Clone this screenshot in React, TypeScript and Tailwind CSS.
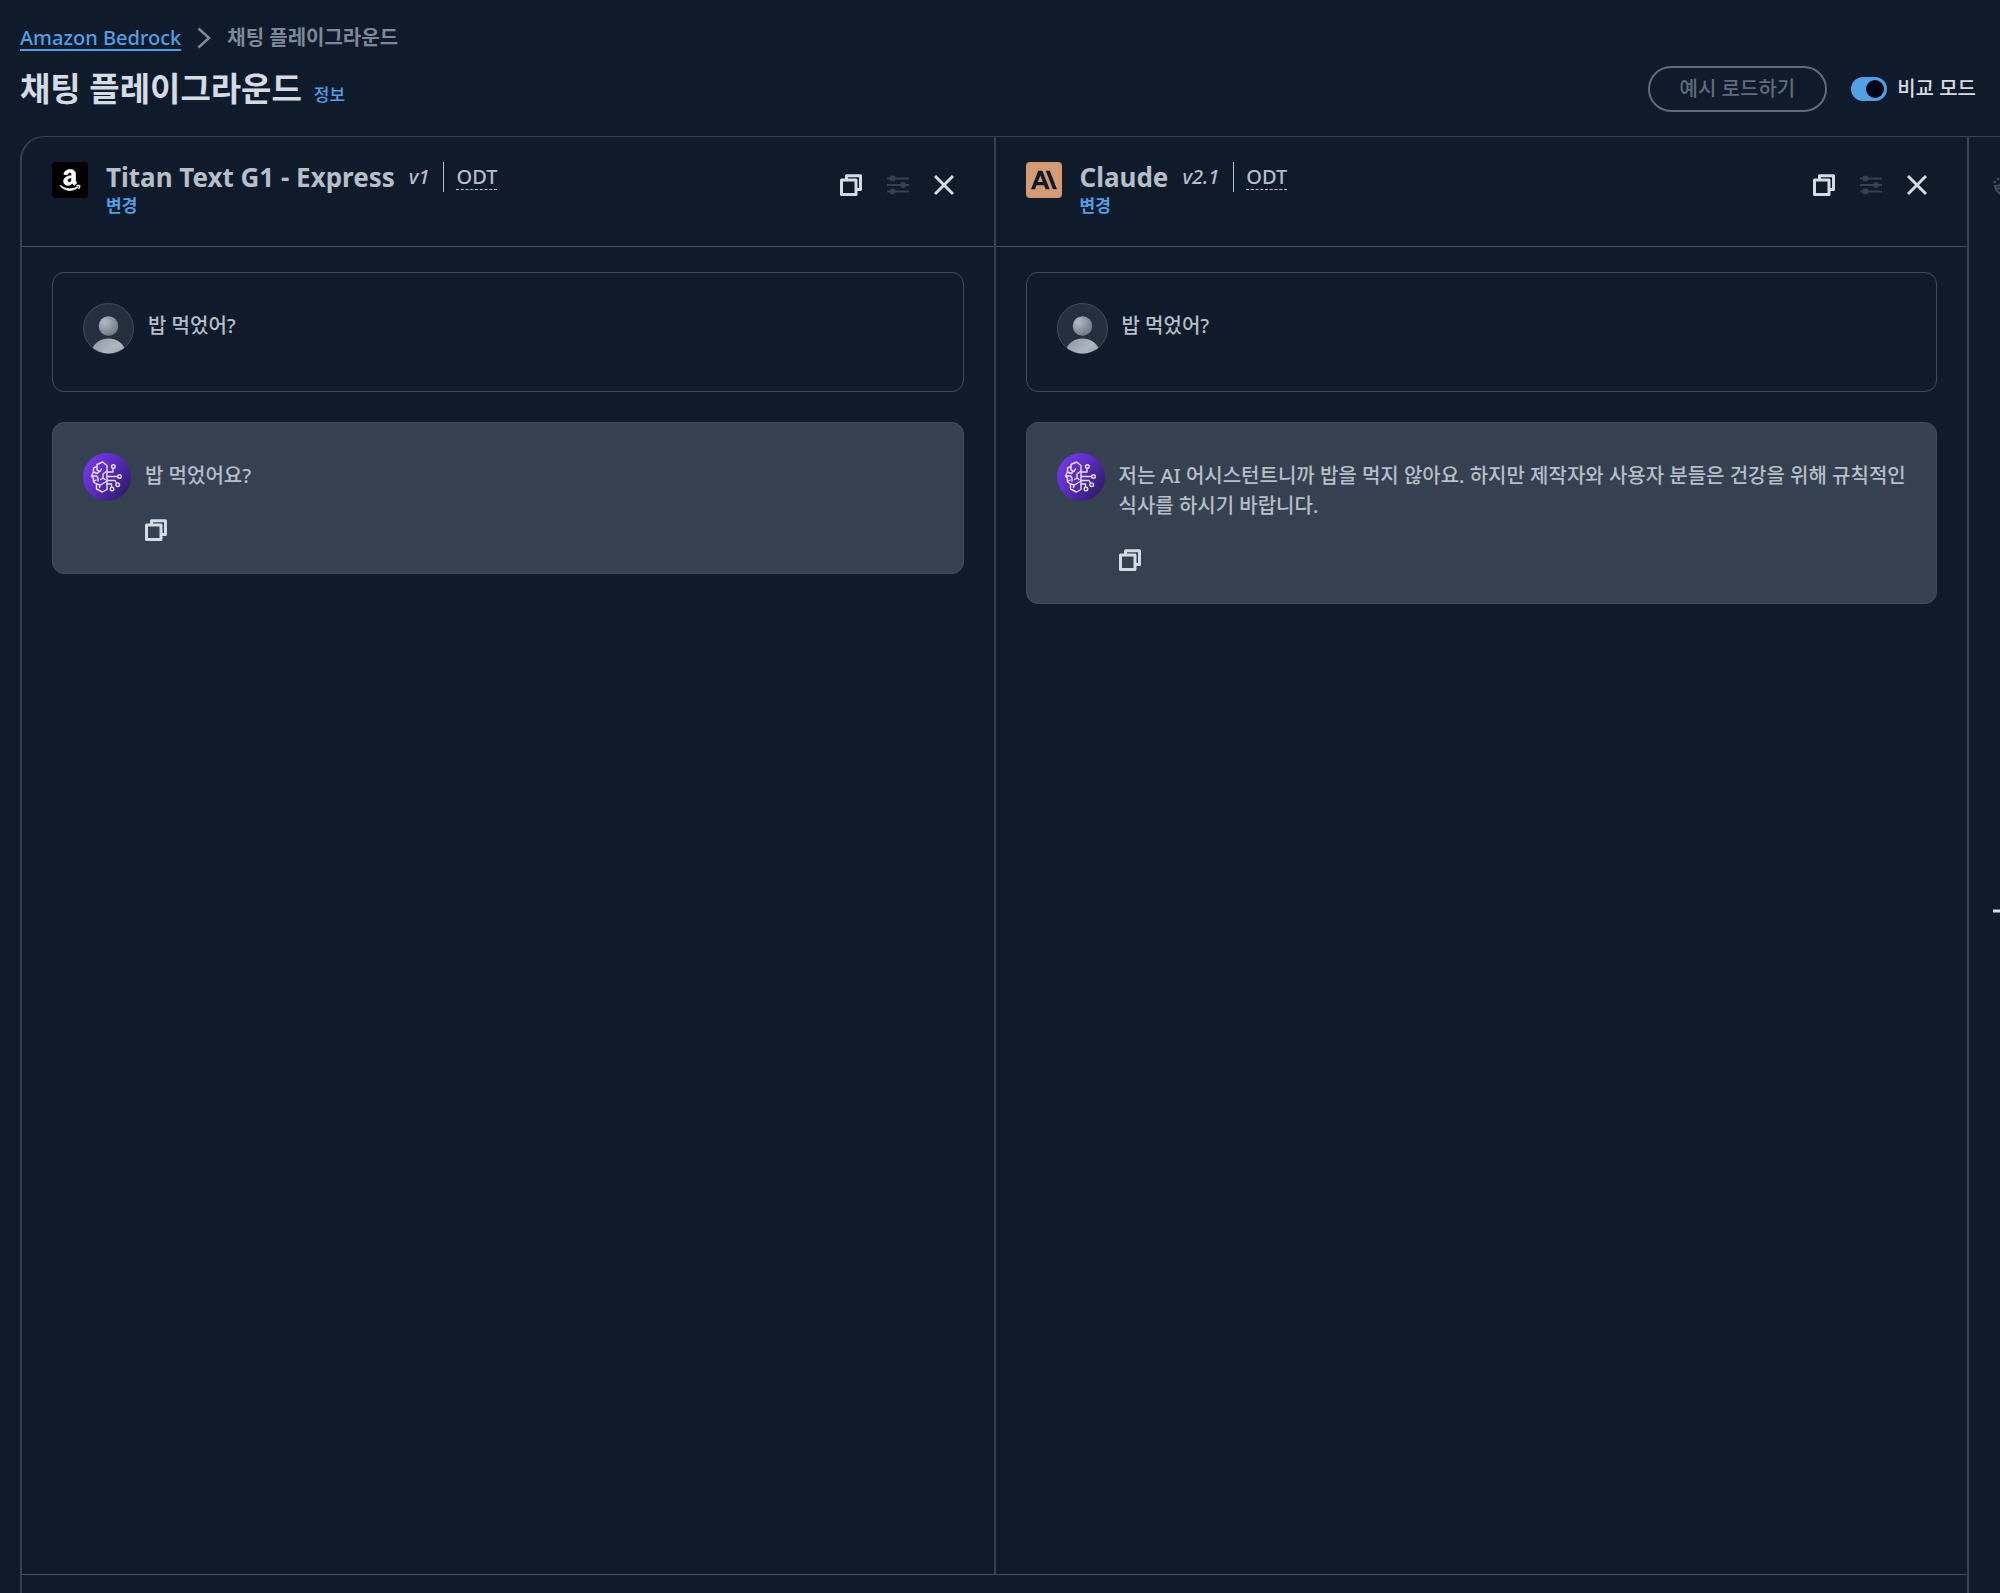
import { useState } from 'react'
import { SiAnthropic } from 'react-icons/si'
import { FaAmazon } from 'react-icons/fa'

type Model = {
  id: string
  name: string
  version: string
  vendor: 'amazon' | 'anthropic'
  question: string
  answer: string
}

const models: Model[] = [
  {
    id: 'titan',
    name: 'Titan Text G1 - Express',
    version: 'v1',
    vendor: 'amazon',
    question: '밥 먹었어?',
    answer: '밥 먹었어요?',
  },
  {
    id: 'claude',
    name: 'Claude',
    version: 'v2.1',
    vendor: 'anthropic',
    question: '밥 먹었어?',
    answer:
      '저는 AI 어시스턴트니까 밥을 먹지 않아요. 하지만 제작자와 사용자 분들은 건강을 위해 규칙적인 식사를 하시기 바랍니다.',
  },
]

function CopyIcon() {
  return (
    <svg className="w-[22px] h-[22px]" viewBox="0 0 22 22" fill="none" stroke="currentColor" strokeWidth="3" strokeLinejoin="round">
      <path d="M1.500 6h14.500v14.500H1.500z" />
      <path d="M6.500 6V1.800h14V15.500H16" />
    </svg>
  )
}

function SlidersIcon() {
  return (
    <svg className="w-6 h-[22px]" viewBox="0 0 24 22" fill="currentColor" stroke="currentColor" strokeWidth="2">
      <path d="M1 4.500h22M1 11h22M1 17.500h22" />
      <circle cx="6.500" cy="4.500" r="2" />
      <circle cx="17" cy="11" r="2" />
      <circle cx="6.500" cy="17.500" r="2" />
    </svg>
  )
}

function CloseIcon() {
  return (
    <svg className="w-5 h-[22px]" viewBox="0 0 20 22" fill="none" stroke="currentColor" strokeWidth="3">
      <path d="M1 2l18 18M19 2L1 20" />
    </svg>
  )
}

function BroomIcon() {
  return (
    <svg className="w-6 h-6 shrink-0" viewBox="0 0 24 24" fill="none" stroke="currentColor" strokeWidth="2">
      <circle cx="1.500" cy="9" r="1.300" fill="currentColor" stroke="none" />
      <circle cx="5" cy="6" r="1.300" fill="currentColor" stroke="none" />
      <path d="M2 13c4 0 6-1 8-4l6 5c-3 3-4 5-5 8-5-1-8-4-9-9z" />
      <path d="M4 16l6-2M14 11l8-9" />
    </svg>
  )
}

function ModelLogo({ vendor }: { vendor: Model['vendor'] }) {
  if (vendor === 'amazon') {
    return (
      <span className="w-9 h-9 shrink-0 rounded bg-black text-white flex items-center justify-center">
        <FaAmazon className="w-6 h-6" stroke="currentColor" strokeWidth="14" />
      </span>
    )
  }
  return (
    <span className="w-9 h-9 shrink-0 rounded bg-[#d49a73] text-[#0f1b2a] flex items-center justify-center">
      <SiAnthropic className="w-[26px] h-[26px]" />
    </span>
  )
}

function UserAvatar({ id }: { id: string }) {
  return (
    <svg className="w-[51px] h-[51px] shrink-0" viewBox="0 0 51 51">
      <defs>
        <radialGradient id={`${id}-head`} cx="0.3" cy="0.3" r="0.8">
          <stop offset="0" stopColor="#b4bac4" />
          <stop offset="1" stopColor="#6c7582" />
        </radialGradient>
        <linearGradient id={`${id}-body`} x1="0" y1="0" x2="1" y2="1">
          <stop offset="0" stopColor="#8d95a2" />
          <stop offset="0.5" stopColor="#b0b6c1" />
          <stop offset="1" stopColor="#8b93a0" />
        </linearGradient>
        <clipPath id={`${id}-clip`}>
          <circle cx="25.500" cy="25.500" r="25" />
        </clipPath>
      </defs>
      <circle cx="25.500" cy="25.500" r="25" fill="#232f3e" stroke="#414d5c" />
      <circle cx="25.500" cy="23" r="9.800" fill={`url(#${id}-head)`} />
      <ellipse cx="25.500" cy="49" rx="16.500" ry="13.500" fill={`url(#${id}-body)`} clipPath={`url(#${id}-clip)`} />
    </svg>
  )
}

function BotAvatar({ id }: { id: string }) {
  return (
    <svg className="w-12 h-12 shrink-0" viewBox="0 0 48 48">
      <defs>
        <linearGradient id={`${id}-bot`} x1="0.1" y1="0.2" x2="0.9" y2="0.8">
          <stop offset="0" stopColor="#7236e4" />
          <stop offset="0.45" stopColor="#5a2bc0" />
          <stop offset="1" stopColor="#321c6c" />
        </linearGradient>
      </defs>
      <circle cx="24" cy="24" r="24" fill={`url(#${id}-bot)`} />
      <g fill="none" stroke="#e9defc" strokeWidth="1.400" strokeLinejoin="round" strokeLinecap="round">
        <path d="M24 12.500v24l-4.500 2.500-6-3v-5l-3-2v-3.500l-2-2.500 2-4v-4l3.500-1.500v-2l5.500-2.500z" />
        <path d="M14 13.500v3.500l3 1.500 1.500-2.500M10.500 19l4 1.500 1-1.500M8.500 23h5l1.500 2v3M10.500 28.500l2.500-1.500M24 18l-4 3v4l-2.500 1.500M20 25l2 1.500M13.500 31l4 1 6.500-4M17 32l-.5 2.500" />
        <path d="M24 19h6v-3.500M24 23.500h10.500M24 27.500h8l1.500 2.500M24 31h4.500v3" />
        <circle cx="30.300" cy="13.500" r="1.800" />
        <circle cx="36.500" cy="23.500" r="1.800" />
        <circle cx="34.700" cy="31.700" r="1.800" />
        <circle cx="29" cy="36" r="1.800" />
      </g>
    </svg>
  )
}

function ModelPanel({ model }: { model: Model }) {
  return (
    <section className="flex-1 min-w-0 flex flex-col">
      <header className="h-[110px] px-[30px] pt-[25px] flex items-start border-b border-[#414d5c]">
        <ModelLogo vendor={model.vendor} />
        <div className="ml-[18px] flex-1">
          <div className="flex items-center h-[30px]">
            <h2 className="text-[26px] leading-[30px] font-bold text-[#b6bec9]">{model.name}</h2>
            <span className="ml-3.5 text-xl leading-[30px] font-medium italic text-[#b6bec9]">{model.version}</span>
            <span className="ml-3.5 w-px h-[30px] bg-[#b6bec9]" />
            <span className="ml-3 text-xl leading-6 font-medium text-[#b6bec9] border-b border-dashed border-[#b6bec9]">ODT</span>
          </div>
          <button className="block text-[17px] leading-7 font-bold text-[#539fe5]">변경</button>
        </div>
        <div className="flex items-center gap-6 mt-3 mr-2.5 text-[#d5dbe4]">
          <button aria-label="복사">
            <CopyIcon />
          </button>
          <button aria-label="구성" disabled className="text-[#35414f]">
            <SlidersIcon />
          </button>
          <button aria-label="닫기">
            <CloseIcon />
          </button>
        </div>
      </header>

      <div className="flex-1 px-[30px] pt-[25px] flex flex-col gap-[30px]">
        <article className="flex items-start gap-3.5 p-[30px] rounded-xl border border-[#414d5c]">
          <UserAvatar id={model.id} />
          <p className="mt-2 mb-5 text-xl leading-[30px] font-medium text-[#b6bec9]">{model.question}</p>
        </article>
        <article className="flex items-start gap-3.5 p-[30px] rounded-xl border border-[#414d5c] bg-[#354150]">
          <BotAvatar id={model.id} />
          <div className="mt-2 text-[#b6bec9]">
            <p className="text-xl leading-[30px] font-medium">{model.answer}</p>
            <button aria-label="답변 복사" className="block mt-7 mb-0.5 text-[#d5dbe4]">
              <CopyIcon />
            </button>
          </div>
        </article>
      </div>
    </section>
  )
}

function App() {
  const [compare, setCompare] = useState(true)

  return (
    <div className="min-h-screen flex flex-col bg-[#0f1b2a] pl-5 font-['Noto_Sans','Noto_Sans_CJK_KR',sans-serif]">
      {/* Breadcrumb */}
      <nav aria-label="이동 경로" className="flex items-center h-[30px] mt-[23px] text-xl leading-[30px] font-medium">
        <a href="#bedrock" className="text-[#539fe5] underline decoration-2 underline-offset-4">
          Amazon Bedrock
        </a>
        <svg className="w-3.5 h-[22px] mx-4" viewBox="0 0 14 22" fill="none" stroke="#7d8998" strokeWidth="2.500">
          <path d="M1.500 1.500L12 11 1.500 20.500" />
        </svg>
        <span className="text-[#7d8998] font-bold">채팅 플레이그라운드</span>
      </nav>

      {/* Title row */}
      <div className="flex items-center h-[83px] pr-6 pb-3">
        <div className="flex items-baseline flex-1 gap-3">
          <h1 className="text-[33px] leading-10 font-bold text-[#d5dbe4]">채팅 플레이그라운드</h1>
          <a href="#info" className="text-[17px] font-medium text-[#539fe5]">
            정보
          </a>
        </div>
        <button disabled className="h-[46px] px-[30px] rounded-full border-2 border-[#5f6b7a] text-xl font-medium text-[#5f6b7a]">
          예시 로드하기
        </button>
        <label className="flex items-center gap-2.5 ml-6 text-xl font-medium text-[#d5dbe4]">
          <input
            type="checkbox"
            role="switch"
            checked={compare}
            onChange={e => setCompare(e.target.checked)}
            className="appearance-none w-9 h-6 p-[3px] flex rounded-full bg-[#5f6b7a] checked:bg-[#539fe5] checked:justify-end before:w-[18px] before:h-[18px] before:rounded-full before:bg-[#000716]"
          />
          비교 모드
        </label>
      </div>

      {/* Panels */}
      <div className="flex-1 flex">
        <main className="flex-1 min-w-0 flex flex-col rounded-tl-3xl border-t border-l-2 border-[#354150]">
          <div className="flex-1 flex divide-x-2 divide-[#354150] border-b border-[#414d5c]">
            {models.map(model => (
              <ModelPanel key={model.id} model={model} />
            ))}
          </div>
          <div className="h-[18px]" />
        </main>
        <aside className="w-[33px] border-l-2 border-t border-[#354150] flex flex-col overflow-hidden pl-6">
          <button aria-label="지우기" disabled className="mt-9 text-[#414d5c] flex">
            <BroomIcon />
          </button>
          <button aria-label="추가" className="mt-[702px] text-[#d5dbe4] flex">
            <svg className="w-6 h-6 shrink-0" viewBox="0 0 24 24" stroke="currentColor" strokeWidth="3">
              <path d="M0 12h24M12 0v24" />
            </svg>
          </button>
        </aside>
      </div>
    </div>
  )
}

export default App
